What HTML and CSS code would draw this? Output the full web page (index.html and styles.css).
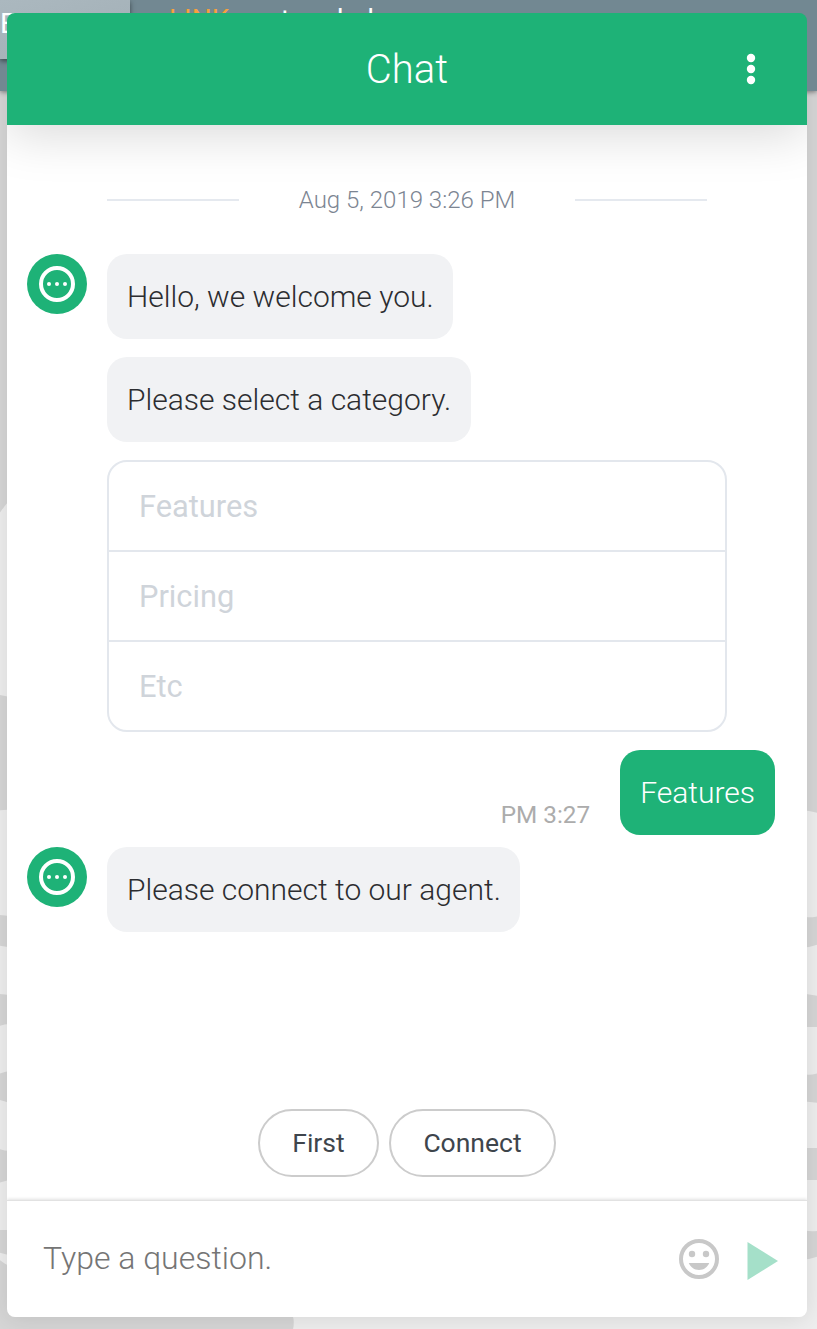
FILE: index.html
```
<!DOCTYPE html>
<html lang="en">
<head>
<meta charset="utf-8">
<title>Chat</title>
<link rel="stylesheet" href="styles.css">
</head>
<body>
<div class="page" aria-hidden="true">
  <div class="topbar"><span class="tab">E</span><p class="headline"><span class="brand">LINK</span> custom help</p></div>
  <svg class="blobs" width="817" height="1329" viewBox="0 0 817 1329">
    <g fill="#eeeeee">
      <path d="M-10 530Q0 510 10 500V697L-10 693ZM-10 811L20 809V917L-10 914ZM-10 944L20 949V996L-10 993ZM-10 1032Q4 1020 20 1026V1070Q4 1070 -10 1078ZM-10 1097L20 1106V1149Q4 1154 -10 1144ZM-10 1188Q4 1178 20 1180V1230H-10ZM-10 1250Q4 1268 20 1268V1258Z"/>
      <path d="M800 810Q820 811 830 820V912Q812 920 800 916ZM800 948Q815 948 830 938V998L800 993ZM800 1027H830V1068Q812 1078 800 1073ZM800 1101L830 1104V1148H800ZM800 1180H830V1228Q812 1234 800 1229ZM800 1260Q815 1260 830 1250V1340H290Q298 1318 289 1310H800Z"/>
    </g>
  </svg>
</div>
<main class="chat">
  <header class="chat-header">
    <h1>Chat</h1>
    <svg class="menu" width="10" height="32" viewBox="0 0 10 32" fill="#fff"><circle cx="5" cy="5" r="4.2"/><circle cx="5" cy="16" r="4.2"/><circle cx="5" cy="27" r="4.2"/></svg>
  </header>
  <section class="messages">
    <div class="date">Aug 5, 2019 3:26 PM</div>
    <div class="row">
      <svg class="avatar" width="60" height="60" viewBox="0 0 60 60"><circle cx="30" cy="30" r="30" fill="#1eb277"/><circle cx="30" cy="30" r="16" fill="none" stroke="#fff" stroke-width="4"/><g fill="#fff"><circle cx="22" cy="30" r="2"/><circle cx="30" cy="30" r="2"/><circle cx="38" cy="30" r="2"/></g></svg>
      <div class="stack">
        <p class="bubble">Hello, we welcome you.</p>
        <p class="bubble">Please select a category.</p>
        <ul class="options"><li>Features</li><li>Pricing</li><li>Etc</li></ul>
      </div>
    </div>
    <div class="row mine"><time>PM 3:27</time><p class="bubble sent">Features</p></div>
    <div class="row">
      <svg class="avatar" width="60" height="60" viewBox="0 0 60 60"><circle cx="30" cy="30" r="30" fill="#1eb277"/><circle cx="30" cy="30" r="16" fill="none" stroke="#fff" stroke-width="4"/><g fill="#fff"><circle cx="22" cy="30" r="2"/><circle cx="30" cy="30" r="2"/><circle cx="38" cy="30" r="2"/></g></svg>
      <div class="stack"><p class="bubble">Please connect to our agent.</p></div>
    </div>
    <div class="quick"><button class="first">First</button><button class="connect">Connect</button></div>
  </section>
  <footer class="composer">
    <span class="placeholder">Type a question.</span>
    <svg class="smile" width="40" height="40" viewBox="0 0 40 40" fill="#c8c8c8"><circle cx="20" cy="20" r="18" fill="none" stroke="#c8c8c8" stroke-width="4"/><circle cx="13" cy="15" r="3.2"/><circle cx="27" cy="15" r="3.2"/><path d="M9.800 24H30.200C28.600 28.200 24.700 31 20 31S11.400 28.200 9.800 24Z"/></svg>
    <svg class="send" width="31" height="38" viewBox="0 0 31 38"><path d="M.5 0L31 19L.5 38Z" fill="#a5e0c9"/></svg>
  </footer>
</main>
</body>
</html>
```
FILE: styles.css
```
* { box-sizing: border-box; }
body { margin: 0; height: 1329px; overflow: hidden; position: relative; font-family: Roboto, "Liberation Sans", sans-serif; font-weight: 300; padding: 13px 10px 12px 7px; }
h1, p, ul { margin: 0; padding: 0; font-weight: inherit; }
.page { position: absolute; inset: 0; background: #d6d6d6; overflow: hidden; }
.topbar { position: relative; z-index: 1; height: 91px; display: flex; align-items: flex-start; background: #728892; box-shadow: 0 1px 5px rgba(0,0,0,.45); }
.tab { width: 130px; height: 59px; padding-top: 7px; background: linear-gradient(160deg, #abb8bf, #a2afb6); color: #fff; font-size: 28px; font-weight: 400; line-height: 33px; box-shadow: 0 2px 5px rgba(0,0,0,.5); }
.headline { margin: 4px 0 0 39px; color: #fff; font-size: 28px; line-height: 32px; font-weight: 400; white-space: nowrap; }
.brand { color: #f7a13c; }
.blobs { position: absolute; top: 0; left: 0; filter: blur(.6px); }
.chat { position: relative; width: 800px; height: 1304px; display: flex; flex-direction: column; background: #fff; border-radius: 8px; overflow: hidden; }
.page::after { content: ""; position: absolute; left: 7px; top: 13px; width: 800px; height: 1304px; border-radius: 8px; box-shadow: 0 2px 24px rgba(0,0,0,.1); }
.chat-header { position: relative; z-index: 1; height: 112px; flex: none; display: grid; grid-template-columns: 1fr auto 1fr; align-items: center; background: #1eb277; color: #fff; box-shadow: 0 10px 50px rgba(0,0,0,.15); }
.chat-header h1 { grid-column: 2; padding-top: 2px; font-size: 40px; line-height: 48px; }
.menu { justify-self: end; margin-right: 51px; }
.messages { flex: none; height: 1075px; padding: 60px 32px 0 20px; display: flex; flex-direction: column; }
.date { display: flex; align-items: center; justify-content: space-between; width: 600px; margin: 0 0 39px 80px; height: 30px; font-size: 24px; color: #7c8592; }
.date::before, .date::after { content: ""; width: 132px; height: 2px; background: #e5e9ef; }
.row { display: flex; align-items: flex-start; gap: 20px; }
.avatar { flex: none; }
.stack { display: flex; flex-direction: column; align-items: flex-start; gap: 18px; }
.bubble { height: 85px; padding: 0 19.5px 0 20px; border-radius: 20px; background: #f1f2f4; color: #2c2d30; font-size: 30px; line-height: 85px; white-space: nowrap; }
.options { width: 620px; list-style: none; border: 2px solid #e3e7ed; border-radius: 20px; color: #cfd4da; font-size: 30.8px; font-weight: 400; }
.options li { height: 90px; padding-left: 30px; line-height: 89px; border-bottom: 2px solid #e3e7ed; }
.options li:last-child { height: 88px; border-bottom: 0; }
.mine { justify-content: flex-end; align-items: flex-end; gap: 30px; margin: 18px 0 12px; }
.mine time { font-size: 24.3px; font-weight: 400; line-height: 30px; margin-bottom: 5px; color: #acacac; }
.sent { padding-right: 20px; background: #1eb277; color: #fff; }
.quick { display: flex; justify-content: center; gap: 10px; margin: 177px -12px 0 0; }
.quick button { height: 68px; padding: 0 0 2px; border: 2px solid #ccc; border-radius: 34px; background: #fff; color: #3e454c; font: 400 26.5px Roboto, sans-serif; }
.first { width: 121px; }
.connect { width: 167px; }
.composer { flex: 1; display: flex; align-items: center; padding: 0 29px 0 36px; border-top: 1px solid #e2e2e2; box-shadow: 0 -1px 3px rgba(0,0,0,.12); }
.placeholder { flex: 1; margin-top: -3px; font-size: 32px; color: #757575; }
.smile { margin: -1px 28px 0 0; }
.send { margin-top: 3px; }
```
